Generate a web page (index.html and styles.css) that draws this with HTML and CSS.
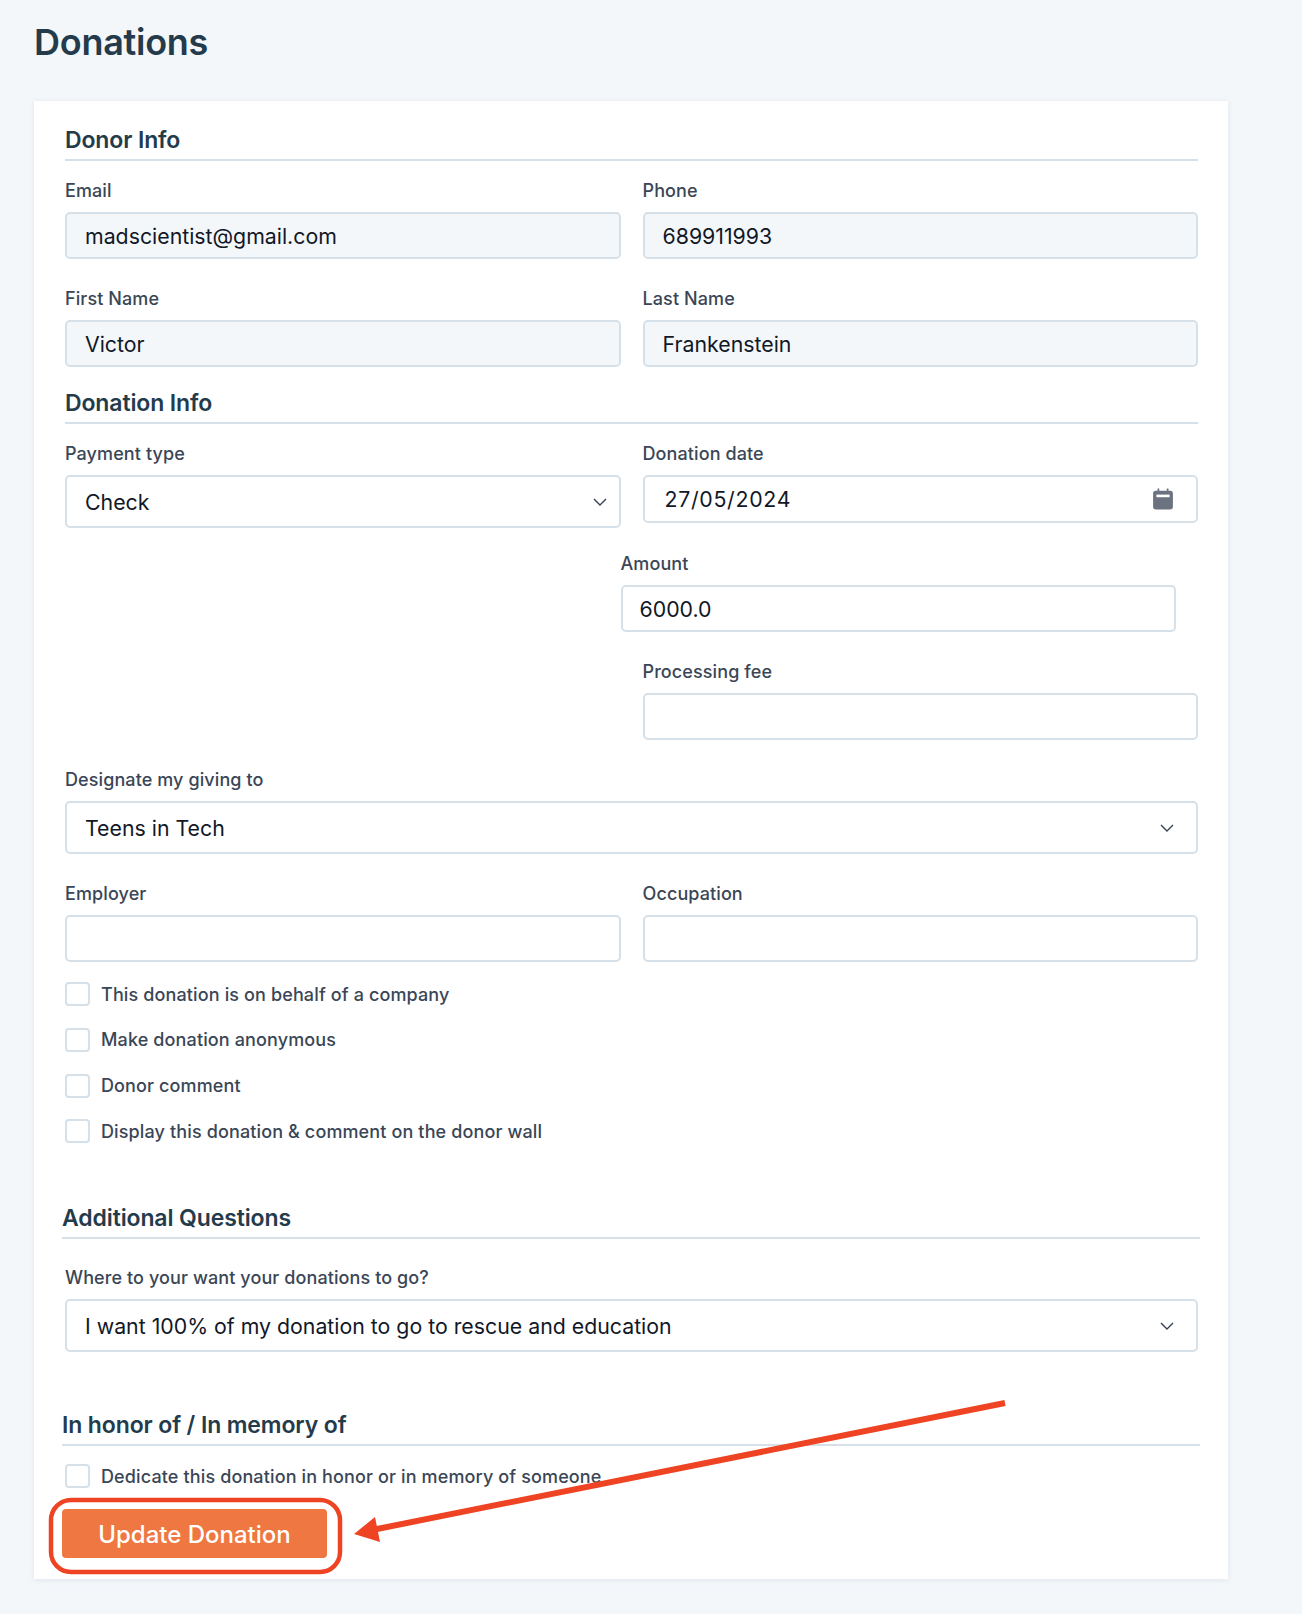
FILE: index.html
```html
<!DOCTYPE html>
<html lang="en">
<head>
<meta charset="utf-8">
<title>Donations</title>
<link rel="stylesheet" href="styles.css">
</head>
<body>
<main class="page">
  <h1 class="title">Donations</h1>
  <form class="card">
    <h2 class="section">Donor Info</h2>
    <div class="grid first">
      <div class="field"><label>Email</label><input class="input filled" value="madscientist@gmail.com"></div>
      <div class="field"><label>Phone</label><input class="input filled" value="689911993"></div>
      <div class="field"><label>First Name</label><input class="input filled" value="Victor"></div>
      <div class="field"><label>Last Name</label><input class="input filled" value="Frankenstein"></div>
    </div>
    <h2 class="section donation">Donation Info</h2>
    <div class="grid first">
      <div class="field">
        <label>Payment type</label>
        <div class="select">
          <span>Check</span>
          <svg class="chev near" viewBox="0 0 14 8"><path d="M1 1l6 6 6-6"/></svg>
        </div>
      </div>
      <div class="field">
        <label>Donation date</label>
        <div class="input date">
          <span>27/05/2024</span>
          <svg class="cal" viewBox="0 0 20 20"><path d="M5 0.5h1.6v2h6.8v-2H15v2h1.6A2.4 2.4 0 0 1 19 4.9v12.2a2.4 2.4 0 0 1-2.4 2.4H3.400A2.400 2.400 0 0 1 1 17.100V4.900A2.400 2.400 0 0 1 3.400 2.500H5z" fill="#6b7280"/><rect x="4" y="6" width="12" height="2.400" fill="#fff"/></svg>
        </div>
      </div>
      <div class="field amount"><label>Amount</label><input class="input amount-input" value="6000.0"></div>
      <div class="field fee"><label>Processing fee</label><input class="input"></div>
    </div>
    <div class="field wide designate">
      <label>Designate my giving to</label>
      <div class="select">
        <span>Teens in Tech</span>
        <svg class="chev" viewBox="0 0 14 8"><path d="M1 1l6 6 6-6"/></svg>
      </div>
    </div>
    <div class="grid employer">
      <div class="field"><label>Employer</label><input class="input"></div>
      <div class="field"><label>Occupation</label><input class="input"></div>
    </div>
    <div class="checks">
      <label class="check"><input type="checkbox"><span>This donation is on behalf of a company</span></label>
      <label class="check"><input type="checkbox"><span>Make donation anonymous</span></label>
      <label class="check"><input type="checkbox"><span>Donor comment</span></label>
      <label class="check"><input type="checkbox"><span>Display this donation &amp; comment on the donor wall</span></label>
    </div>
    <h2 class="section outdent additional">Additional Questions</h2>
    <div class="field wide question">
      <label>Where to your want your donations to go?</label>
      <div class="select">
        <span>I want 100% of my donation to go to rescue and education</span>
        <svg class="chev" viewBox="0 0 14 8"><path d="M1 1l6 6 6-6"/></svg>
      </div>
    </div>
    <h2 class="section outdent honor">In honor of / In memory of</h2>
    <label class="check dedicate"><input type="checkbox"><span>Dedicate this donation in honor or in memory of someone</span></label>
    <button class="submit" type="button">Update Donation</button>
  </form>
</main>
<svg class="annotation" viewBox="0 0 1302 1614" aria-hidden="true">
  <rect x="51" y="1500" width="289" height="72" rx="20" fill="none" stroke="#ee4423" stroke-width="4.500"/>
  <path d="M1005 1403L372 1530" fill="none" stroke="#ee4423" stroke-width="6"/>
  <path d="M354 1534L375 1517L380 1542Z" fill="#ee4423"/>
</svg>
</body>
</html>
```
FILE: styles.css
```css
* { box-sizing: border-box; }
html, body { margin: 0; padding: 0; }
body {
  width: 1302px;
  height: 1614px;
  background: #f4f7fa;
  font-family: Inter, "Liberation Sans", sans-serif;
  color: #243b4c;
  position: relative;
  overflow: hidden;
}
.page { padding: 0 0 0 34px; }
.title {
  margin: 0;
  height: 101px;
  padding-top: 20px;
  font-size: 36px;
  line-height: 44px;
  font-weight: 600;
  letter-spacing: -0.27px;
}
.card {
  width: 1194px;
  height: 1478px;
  background: #fff;
  padding: 24px 30px 0 31px;
  box-shadow: 0 1px 6px rgba(120, 150, 180, 0.16);
}
.section {
  margin: 0;
  height: 36px;
  line-height: 30px;
  font-size: 23px;
  font-weight: 600;
  letter-spacing: -0.12px;
  border-bottom: 2px solid #d5e0e9;
}
.donation { margin-top: 21px; }
.outdent { margin-left: -3px; margin-right: -2px; }
.additional { margin-top: 60px; }
.honor { margin-top: 58px; }
.grid {
  display: grid;
  grid-template-columns: 556px 1fr;
  column-gap: 21.5px;
  row-gap: 29px;
  align-items: start;
}
.first { margin-top: 19px; }
.field label {
  display: block;
  height: 22px;
  line-height: 22px;
  margin-bottom: 10px;
  font-size: 18px;
  font-weight: 500;
  letter-spacing: 0.1px;
  color: #3a4656;
}
.input, .select {
  display: block;
  width: 100%;
  border: 2px solid #d5e0e9;
  border-radius: 5px;
  background: #fff;
  padding: 0 18px;
  font: 400 21.3px Inter, "Liberation Sans", sans-serif;
  color: #111827;
  outline: none;
}
.input { height: 47px; }
.filled { background: #f4f7fa; }
.select {
  height: 53px;
  display: flex;
  align-items: center;
  justify-content: space-between;
}
.chev {
  width: 14px;
  height: 8px;
  margin-right: 4px;
  fill: none;
  stroke: #374151;
  stroke-width: 1.4;
}
.near { margin-right: -6px; }
.date {
  height: 48px;
  display: flex;
  align-items: center;
  justify-content: space-between;
  padding: 0 22px 0 20px;
  letter-spacing: 0.7px;
}
.cal { width: 22px; height: 22px; }
.amount { grid-column: 2; margin: -4px 22px 0 -22px; }
.amount-input { padding: 0 17px; }
.fee { grid-column: 2; }
.designate { margin-top: 29px; }
.employer { margin-top: 29px; }
.checks {
  margin-top: 20px;
  display: flex;
  flex-direction: column;
  gap: 21.8px;
}
.check {
  display: flex;
  align-items: center;
  gap: 11px;
  height: 24px;
  font-size: 18px;
  font-weight: 500;
  letter-spacing: 0.13px;
  color: #3a4656;
}
.check input {
  appearance: none;
  margin: 0;
  width: 25px;
  height: 24px;
  border: 2px solid #d5e0e9;
  border-radius: 4px;
  background: #fff;
}
.question { margin-top: 28px; }
.dedicate { margin-top: 18px; }
.submit {
  display: block;
  margin: 21px 0 0 -3px;
  width: 265px;
  height: 49px;
  border: 0;
  border-radius: 4px;
  padding: 2px 0 0;
  background: #ef7742;
  color: #fff;
  font: 500 24px Inter, "Liberation Sans", sans-serif;
}
.annotation {
  position: absolute;
  left: 0;
  top: 0;
  width: 1302px;
  height: 1614px;
  pointer-events: none;
}
```
